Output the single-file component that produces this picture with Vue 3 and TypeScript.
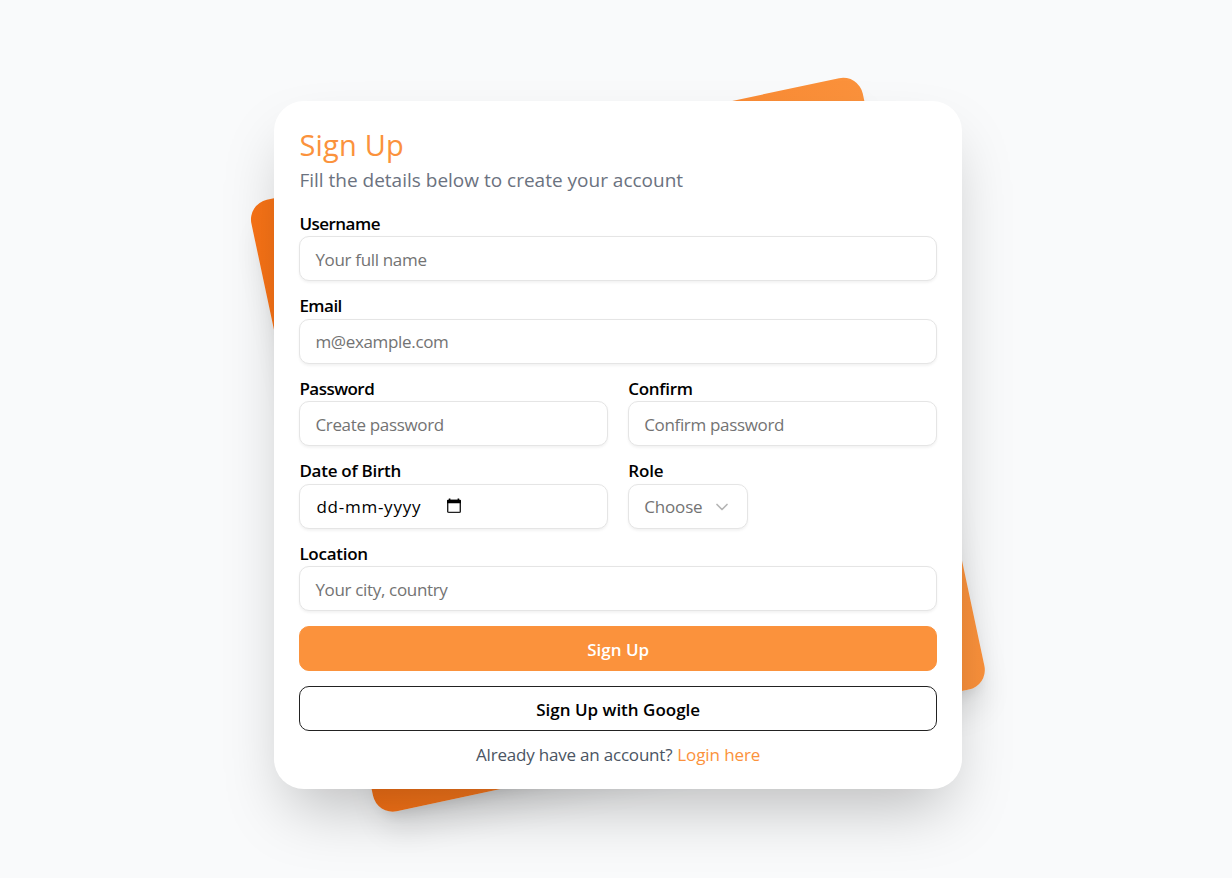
<script setup lang="ts">
import { ref } from 'vue'

const username = ref('')
const email = ref('')
const password = ref('')
const confirm = ref('')
const location = ref('')
</script>

<template>
  <main class="page">
    <div class="stage">
      <div class="tilt"></div>
      <form class="card" @submit.prevent>
        <h1 class="title">Sign Up</h1>
        <p class="subtitle">Fill the details below to create your account</p>

        <div class="field">
          <label class="label tight" for="username">Username</label>
          <input id="username" v-model="username" class="input" placeholder="Your full name" />
        </div>
        <div class="field">
          <label class="label tight" for="email">Email</label>
          <input id="email" v-model="email" class="input" placeholder="m@example.com" />
        </div>
        <div class="row">
          <div class="field">
            <label class="label tight" for="password">Password</label>
            <input id="password" v-model="password" type="password" class="input" placeholder="Create password" />
          </div>
          <div class="field">
            <label class="label" for="confirm">Confirm</label>
            <input id="confirm" v-model="confirm" type="password" class="input" placeholder="Confirm password" />
          </div>
        </div>
        <div class="row">
          <div class="field">
            <span class="label">Date of Birth</span>
            <div class="input date" tabindex="0">
              <span class="date-text">dd-mm-yyyy</span>
              <svg class="calendar" viewBox="0 0 14 16" width="14" height="16">
                <rect x=".7" y="2.4" width="12.6" height="12" rx="1" fill="none" stroke="#222" stroke-width="1.4" />
                <path d="M1 1.8h12a1 1 0 0 1 1 1v2.4H0V2.8a1 1 0 0 1 1-1zM1.8.4h1.6v2H1.8zM10.6.4h1.6v2h-1.6z" fill="#000" />
              </svg>
            </div>
          </div>
          <div class="field">
            <span class="label role">Role</span>
            <button type="button" class="input select">
              <span class="choose">Choose</span>
              <svg class="chevron" viewBox="0 0 24 24" width="20" height="20">
                <path d="m6 9 6 6 6-6" fill="none" stroke="#b5b5b5" stroke-width="2" stroke-linecap="round" stroke-linejoin="round" />
              </svg>
            </button>
          </div>
        </div>
        <div class="field">
          <label class="label" for="location">Location</label>
          <input id="location" v-model="location" class="input" placeholder="Your city, country" />
        </div>

        <button type="submit" class="button primary">Sign Up</button>
        <button type="button" class="button outline">Sign Up with Google</button>
        <p class="footer">
          <span class="ask">Already have an account?</span>
          <a class="login" href="#">Login here</a>
        </p>
      </form>
    </div>
  </main>
</template>

<style>
body {
  margin: 0;
  background: #f9fafb;
}
</style>

<style scoped>
* {
  box-sizing: border-box;
}

.page {
  height: 878px;
  overflow: hidden;
  padding: 101.25px 0 0 274.4px;
  background: #f9fafb;
  font-family: 'Open Sans', 'Noto Sans', sans-serif;
  font-size: 17px;
  color: #000;
}

.stage {
  display: grid;
  grid-template-rows: 688px;
  place-items: center;
  width: 687.5px;
  height: 688px;
}

.tilt,
.card {
  grid-area: 1 / 1;
}

.tilt {
  width: 625px;
  height: 625px;
  border-radius: 20px;
  background: linear-gradient(to right, #f97316, #fb923c);
  box-shadow:
    0 25px 31.25px -6.25px rgba(0, 0, 0, 0.1),
    0 10px 12.5px -7.5px rgba(0, 0, 0, 0.1);
  transform: translate(-0.6px, -0.8px) rotate(-12deg);
}

.card {
  z-index: 1;
  width: 100%;
  height: 688px;
  padding: 25px 25px 20px;
  display: flex;
  flex-direction: column;
  border-radius: 30px;
  background: #fff;
  box-shadow: 0 31.25px 62.5px -15px rgba(0, 0, 0, 0.25);
}

.title,
.subtitle,
.footer {
  margin: 0;
  white-space: nowrap;
}

.title {
  height: 38px;
  line-height: 38px;
  font-size: 29px;
  font-weight: 400;
  letter-spacing: 0.2px;
  color: #fb923c;
}

.subtitle {
  height: 29px;
  margin-bottom: 20.5px;
  line-height: 32px;
  font-size: 19px;
  color: #6b7280;
}

.field {
  display: flex;
  flex-direction: column;
  align-items: flex-start;
  min-width: 0;
  margin-bottom: 15px;
}

.row {
  display: grid;
  grid-template-columns: 1fr 1fr;
  gap: 20px;
}

.label {
  height: 22.5px;
  line-height: 19px;
  font-weight: 600;
  letter-spacing: -0.26px;
  white-space: nowrap;
}

.tight {
  letter-spacing: -0.52px;
}

.role {
  letter-spacing: -0.1px;
}

.input {
  width: 100%;
  height: 45px;
  padding: 1px 15px 0;
  border: 1px solid #e5e5e5;
  border-radius: 10px;
  background: #fff;
  box-shadow: 0 1.25px 2.5px rgba(0, 0, 0, 0.05);
  font: inherit;
  letter-spacing: -0.33px;
  color: #000;
  outline: none;
}

.input::placeholder {
  color: #737373;
  opacity: 1;
}

.date,
.select {
  display: flex;
  align-items: center;
}

.date-text {
  margin-left: 1px;
  letter-spacing: 0.75px;
}

.calendar {
  margin-left: 26px;
  margin-bottom: 2px;
}

.select {
  width: 120px;
  justify-content: space-between;
  letter-spacing: -0.15px;
  color: #737373;
}

.button {
  flex: none;
  height: 45px;
  margin-bottom: 15px;
  padding: 1px 0 0;
  border: 1px solid #fb923c;
  border-radius: 10px;
  font: inherit;
  font-weight: 600;
}

.primary {
  background: #fb923c;
  color: #fff;
}

.outline {
  border-color: #222;
  background: #fff;
  color: #000;
}

.footer {
  display: flex;
  justify-content: center;
  gap: 5px;
  margin-top: -2px;
  line-height: 22px;
  color: #4b5563;
}

.ask {
  letter-spacing: -0.2px;
}

.login {
  letter-spacing: -0.1px;
  color: #fb923c;
  text-decoration: none;
}
</style>
